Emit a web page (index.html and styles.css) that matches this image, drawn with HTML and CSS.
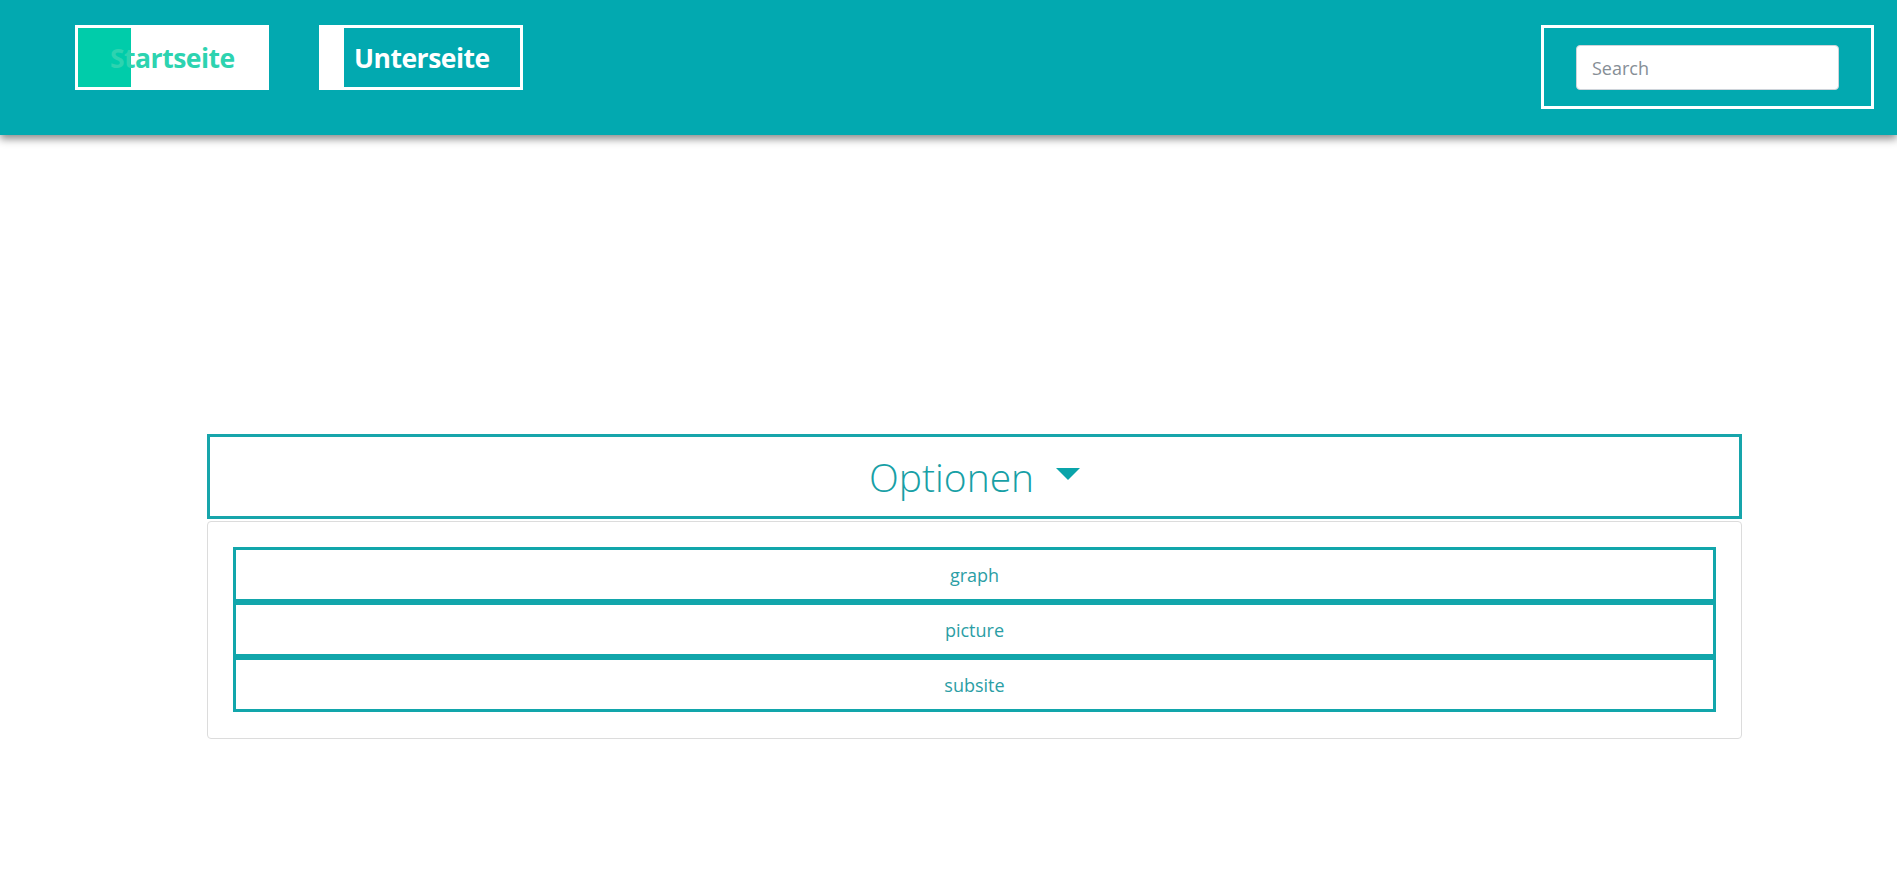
FILE: index.html
```html
<!DOCTYPE html>
<html lang="de">
<head>
<meta charset="utf-8">
<title>Startseite</title>
<link rel="stylesheet" href="styles.css">
</head>
<body>
<header class="topbar">
  <nav class="nav">
    <a class="nav-link nav-active" href="#">Startseite</a>
    <a class="nav-link nav-sub" href="#">Unterseite</a>
  </nav>
  <form class="search-form">
    <input class="search-input" type="text" placeholder="Search">
  </form>
</header>
<main class="content">
  <div class="options-toggle">
    <span class="options-title">Optionen</span>
    <span class="caret"></span>
  </div>
  <div class="options-card">
    <a class="option-item" href="#">graph</a>
    <a class="option-item" href="#">picture</a>
    <a class="option-item" href="#">subsite</a>
  </div>
</main>
</body>
</html>
```
FILE: styles.css
```css
* { box-sizing: border-box; }
html, body { margin: 0; padding: 0; background: #fff; }
body { font-family: "Open Sans", "Noto Sans", sans-serif; }

.topbar {
  height: 135px;
  background: #02a9b0;
  box-shadow: 0 4px 8px rgba(0, 0, 0, 0.45);
  display: flex;
  justify-content: space-between;
  align-items: flex-start;
  padding: 25px 23px 0 75px;
}

.nav { display: flex; gap: 50px; }

.nav-link {
  display: flex;
  align-items: center;
  height: 65px;
  border: 3px solid #fff;
  padding: 1px 0 0 32px;
  font-size: 26.5px;
  font-weight: 700;
  text-decoration: none;
  letter-spacing: -0.5px;
}
.nav-active {
  width: 194px;
  color: #2dd3b0;
  background: linear-gradient(to right, #00ccaa 53px, #fff 53px);
}
.nav-sub {
  width: 204px;
  color: #fff;
  background: linear-gradient(to right, #fff 22px, #02a9b0 22px);
}

.search-form {
  width: 333px;
  height: 84px;
  border: 3px solid #fff;
  padding: 17px 32px 0 32px;
}
.search-input {
  width: 263px;
  height: 45px;
  border: 1px solid #ced4da;
  border-radius: 4px;
  padding: 0 15px;
  font-family: "Open Sans", sans-serif;
  font-size: 18px;
  color: #495057;
  outline: none;
}
.search-input::placeholder { color: #868e96; }

.content {
  margin: 299px 0 0 207px;
  width: 1535px;
}

.options-toggle {
  height: 85px;
  border: 3px solid #17a5ab;
  display: flex;
  justify-content: center;
  align-items: center;
  gap: 22px;
  color: #17a0a6;
}
.options-title {
  font-size: 39px;
  font-weight: 300;
  line-height: 1;
}
.caret {
  width: 0;
  height: 0;
  border-left: 12px solid transparent;
  border-right: 12px solid transparent;
  border-top: 12px solid #0aa4aa;
  margin-bottom: 6px;
}

.options-card {
  margin-top: 2px;
  border: 1px solid #dcdcdc;
  border-radius: 4px;
  padding: 25px 25px 26px 25px;
  display: flex;
  flex-direction: column;
}
.option-item {
  display: block;
  height: 55px;
  line-height: 49px;
  padding-top: 1px;
  border: 3px solid #12a6ab;
  text-align: center;
  color: #2b9ea5;
  font-size: 18px;
  text-decoration: none;
}
```
